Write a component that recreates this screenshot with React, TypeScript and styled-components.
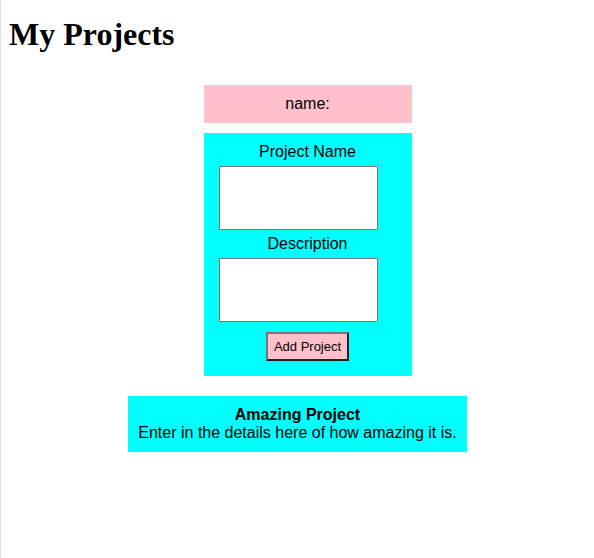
import React from "react";
import styled, { createGlobalStyle } from "styled-components";

const GlobalStyle = createGlobalStyle`
  body {
    margin: 0;
    background: #fff;
    color: #000;
    font-family: "Liberation Sans", Arial, sans-serif;
    font-size: 16px;
    line-height: 18px;
  }
`;

const Page = styled.div`
  box-sizing: border-box;
  min-height: 100vh;
  padding: 16px 8px;
  border-left: 1px solid #e0e0e0;
  display: flex;
  flex-direction: column;
`;

const Title = styled.h1`
  margin: 0 0 32px;
  font-family: "Liberation Serif", "Times New Roman", serif;
  font-size: 32px;
  line-height: 37px;
`;

const Column = styled.div`
  align-self: center;
  width: 208px;
  margin-left: 20px;
  display: flex;
  flex-direction: column;
  gap: 10px;
`;

const NameBar = styled.div`
  padding: 10px;
  background: pink;
  text-align: center;
`;

const Form = styled.form`
  padding: 10px 15px 15px;
  background: cyan;
  display: flex;
  flex-direction: column;
  gap: 5px;
`;

const Label = styled.label`
  text-align: center;
`;

const Field = styled.textarea`
  box-sizing: border-box;
  width: 159px;
  height: 64px;
  margin: 0;
  padding: 2px;
  border: 1px solid #767676;
  border-radius: 1px;
  background: #fff;
  font: 13px "Liberation Sans", Arial, sans-serif;
  resize: none;
`;

const AddButton = styled.button`
  align-self: center;
  margin: 5px 0 0;
  padding: 5px 6px;
  border: 2px solid;
  border-color: #767676 #212121 #212121 #767676;
  border-radius: 0;
  background: pink;
  color: #000;
  font: 13px/15px "Liberation Sans", Arial, sans-serif;
`;

const Card = styled.article`
  align-self: center;
  margin-top: 20px;
  padding: 10px;
  background: cyan;
  text-align: center;
`;

const CardTitle = styled.h2`
  margin: 0;
  font-size: 16px;
  line-height: 18px;
`;

const CardText = styled.p`
  margin: 0;
`;

const projects = [
  {
    title: "Amazing Project",
    description: "Enter in the details here of how amazing it is.",
  },
];

export default function App() {
  return (
    <>
      <GlobalStyle />
      <Page>
        <Title>My Projects</Title>
        <Column>
          <NameBar>name:</NameBar>
          <Form onSubmit={(event: React.FormEvent) => event.preventDefault()}>
            <Label htmlFor="project-name">Project Name</Label>
            <Field id="project-name" />
            <Label htmlFor="description">Description</Label>
            <Field id="description" />
            <AddButton type="submit">Add Project</AddButton>
          </Form>
        </Column>
        {projects.map((project) => (
          <Card key={project.title}>
            <CardTitle>{project.title}</CardTitle>
            <CardText>{project.description}</CardText>
          </Card>
        ))}
      </Page>
    </>
  );
}
